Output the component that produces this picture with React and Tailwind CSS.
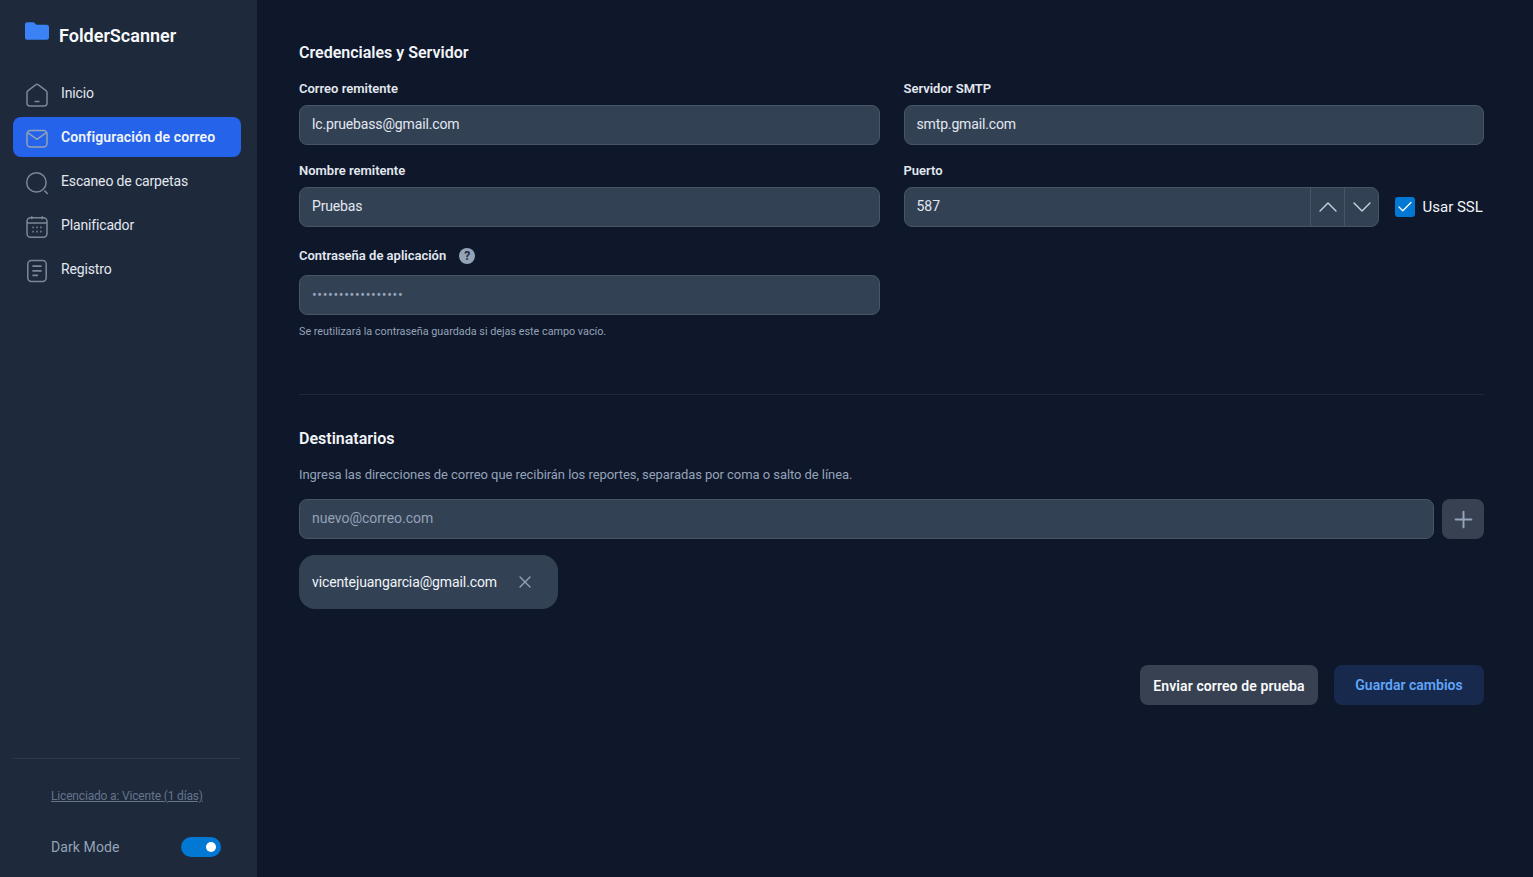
import React from 'react';
import { Check, ChevronDown, ChevronUp, Plus, X } from 'lucide-react';

const HomeIcon = () => (
  <svg width="24" height="24" viewBox="0 0 24 24" fill="none" stroke="currentColor" strokeWidth="1.5">
    <path d="M2 9.6c0-.8.35-1.5 1-2L10.6 1.8a2.2 2.2 0 0 1 2.8 0L21 7.6c.65.5 1 1.2 1 2V20a3 3 0 0 1-3 3H5a3 3 0 0 1-3-3V9.6Z" />
    <path d="M9.5 18.5h5" />
  </svg>
);

const MailIcon = () => (
  <svg width="24" height="24" viewBox="0 0 24 24" fill="none" stroke="currentColor" strokeWidth="1.5">
    <rect x="2" y="3.6" width="20" height="16.4" rx="3.4" />
    <path d="M3 5.8 12 12.4l9-6.6" />
  </svg>
);

const SearchIcon = () => (
  <svg width="24" height="24" viewBox="0 0 24 24" fill="none" stroke="currentColor" strokeWidth="1.5">
    <circle cx="11.4" cy="11.4" r="9.7" />
    <path d="m19.4 19.6 3.4 3.4" />
  </svg>
);

const CalendarIcon = () => (
  <svg width="24" height="24" viewBox="0 0 24 24" fill="none" stroke="currentColor" strokeWidth="1.5">
    <rect x="2" y="2.8" width="20" height="19.4" rx="3.6" />
    <path d="M2 8h20" />
    <path d="M6.8 1.2v3M17.2 1.2v3" />
    <path d="M7.4 12.4h1.4M11.3 12.4h1.4M15.2 12.4h1.4M7.4 16.6h1.4M11.3 16.6h1.4M15.2 16.6h1.4" strokeWidth="1.8" />
  </svg>
);

const LogIcon = () => (
  <svg width="24" height="24" viewBox="0 0 24 24" fill="none" stroke="currentColor" strokeWidth="1.5">
    <rect x="2.8" y="1.6" width="18.4" height="20.8" rx="3.6" />
    <path d="M7.4 7.2h9.2M7.4 11.8h9.2M7.4 16.4h5.6" strokeWidth="1.7" />
  </svg>
);

const navItems = [
  { label: 'Inicio', icon: HomeIcon },
  { label: 'Configuración de correo', icon: MailIcon, active: true },
  { label: 'Escaneo de carpetas', icon: SearchIcon },
  { label: 'Planificador', icon: CalendarIcon },
  { label: 'Registro', icon: LogIcon },
];

const Sidebar = () => (
  <aside className="w-[257px] shrink-0 h-full bg-[#1e293b] flex flex-col">
    <div className="flex items-start pl-[25px] pt-[21px] h-[73px] gap-[10px]">
      <svg width="24" height="20" viewBox="0 0 24 20" className="text-[#3b82f6] mt-[1px]" fill="currentColor">
        <path d="M0 2.4C0 1.1 1 .2 2.2.2h5.6c.7 0 1.3.3 1.8.8l1.7 1.7h10.6c1.1 0 2.1 1 2.1 2.1v10.8c0 1.2-1 2.1-2.1 2.1H2.1C1 17.8 0 16.9 0 15.7V2.4Z" />
      </svg>
      <span className="text-[18px] leading-[28px] font-semibold text-[#f8fafc] mt-[1px]">FolderScanner</span>
    </div>
    <nav className="flex flex-col gap-[4px] pl-[13px] pr-[16px]">
      {navItems.map(({ label, icon: Icon, active }) => (
        <a
          key={label}
          href="#"
          className={`flex items-center gap-[12px] h-[40px] pl-[12px] rounded-[8px] text-[14px] ${
            active ? 'bg-[#2563eb] text-[#f1f5f9] font-semibold tracking-[0.13px]' : 'text-[#e2e8f0] tracking-[-0.15px]'
          }`}
        >
          <span className={`mt-[3px] ${active ? 'text-[#94a3b8]' : 'text-[#7c8898]'}`}>
            <Icon />
          </span>
          <span>{label}</span>
        </a>
      ))}
    </nav>
    <div className="mt-auto ml-[13px] mr-[16px] border-t border-[#334155]/60 pt-[28px] pb-[20px]">
      <a href="#" className="block pl-[38px] text-[12px] leading-[18px] tracking-[-0.17px] text-[#64748b] underline">
        Licenciado a: Vicente (1 días)
      </a>
      <div className="flex items-center justify-between pl-[38px] pr-[20px] mt-[32px]">
        <span className="text-[14px] leading-[20px] tracking-[0.1px] text-[#94a3b8]">Dark Mode</span>
        <div className="w-[40px] h-[20px] rounded-full bg-[#0078d4] flex items-center justify-end pr-[5px]">
          <div className="w-[10px] h-[10px] rounded-full bg-white" />
        </div>
      </div>
    </div>
  </aside>
);

const boxClass = 'w-full h-[40px] px-[12px] rounded-[8px] bg-[#334155] border border-[#475569] text-[14px] outline-none';
const inputClass = `${boxClass} pb-[2px] tracking-[-0.15px] text-[#e2e8f0] placeholder:text-[#94a3b8] placeholder:tracking-normal`;

const Field = ({ label, value }) => (
  <div className="flex flex-col">
    <label className="text-[13px] leading-[20px] font-semibold text-[#e2e8f0] mb-[6px]">{label}</label>
    <input className={inputClass} value={value} readOnly />
  </div>
);

const App = () => (
  <div className="flex w-full h-[877px] overflow-hidden bg-[#0f172a] font-['Roboto','Noto_Sans',sans-serif]">
    <Sidebar />
    <main className="flex-1 pl-[42px] pr-[49px] pt-[41px]">
      <h2 className="text-[16px] leading-[24px] font-semibold text-[#f1f5f9] mb-[14px]">Credenciales y Servidor</h2>

      <div className="grid grid-cols-2 gap-x-[24px] gap-y-[16px]">
        <Field label="Correo remitente" value="lc.pruebass@gmail.com" />
        <Field label="Servidor SMTP" value="smtp.gmail.com" />
        <Field label="Nombre remitente" value="Pruebas" />
        <div className="flex flex-col">
          <label className="text-[13px] leading-[20px] font-semibold text-[#e2e8f0] mb-[6px]">Puerto</label>
          <div className="flex items-center">
            <div className="w-[475px] h-[40px] flex rounded-[8px] bg-[#334155] border border-[#475569] overflow-hidden">
              <input className="flex-1 min-w-0 px-[12px] pb-[2px] bg-transparent text-[14px] text-[#e2e8f0] outline-none" value="587" readOnly />
              <button className="w-[34px] pl-[1px] border-l border-[#475569] flex items-center justify-center text-[#cbd5e1]">
                <ChevronUp size={32} strokeWidth={1} />
              </button>
              <button className="w-[34px] pl-[1px] border-l border-[#475569] flex items-center justify-center text-[#cbd5e1]">
                <ChevronDown size={32} strokeWidth={1} />
              </button>
            </div>
            <div className="ml-[16px] w-[20px] h-[20px] rounded-[3px] bg-[#0078d4] flex items-center justify-center text-white">
              <Check size={18} strokeWidth={1.75} />
            </div>
            <span className="ml-[8px] text-[15px] text-[#f1f5f9]">Usar SSL</span>
          </div>
        </div>
      </div>

      <div className="mt-[19px] w-[581px]">
        <div className="flex items-center gap-[13px] mb-[9px]">
          <label className="text-[13px] leading-[20px] font-semibold text-[#e2e8f0]">Contraseña de aplicación</label>
          <span className="w-[16px] h-[16px] rounded-full bg-[#94a3b8] flex items-center justify-center text-[12px] leading-none font-bold text-[#1e293b]">?</span>
        </div>
        <input className={`${boxClass} text-[#94a3b8] tracking-[0.65px]`} type="password" value="aaaaaaaaaaaaaaaaa" readOnly />
        <p className="mt-[9px] text-[10.8px] leading-[16px] text-[#94a3b8]">
          Se reutilizará la contraseña guardada si dejas este campo vacío.
        </p>
      </div>

      <div className="border-t border-[#1e293b] mt-[54px]" />

      <h2 className="mt-[32px] text-[16px] leading-[24px] font-semibold text-[#f1f5f9]">Destinatarios</h2>
      <p className="mt-[14px] text-[13px] leading-[20px] tracking-[-0.06px] text-[#94a3b8]">
        Ingresa las direcciones de correo que recibirán los reportes, separadas por coma o salto de línea.
      </p>

      <div className="flex gap-[8px] mt-[14px]">
        <input className={inputClass} placeholder="nuevo@correo.com" readOnly />
        <button className="w-[42px] h-[40px] shrink-0 rounded-[8px] bg-[#374151] flex items-center justify-center text-[#94a3b8]">
          <Plus size={27} strokeWidth={1.75} />
        </button>
      </div>

      <div className="mt-[16px] inline-flex items-center h-[54px] w-[259px] pl-[13px] rounded-[16px] bg-[#334155]">
        <span className="text-[14px] tracking-[-0.11px] text-[#f1f5f9]">vicentejuangarcia@gmail.com</span>
        <X size={20} strokeWidth={1.6} className="ml-auto mr-[23px] text-[#94a3b8]" />
      </div>

      <div className="flex justify-end gap-[16px] mt-[56px]">
        <button className="h-[40px] w-[178px] pt-[2px] rounded-[8px] bg-[#374151] text-[14px] font-semibold tracking-[0.1px] text-[#f8fafc]">
          Enviar correo de prueba
        </button>
        <button className="h-[40px] w-[150px] rounded-[8px] bg-[#172a4d] text-[14px] font-semibold text-[#60a5fa]">
          Guardar cambios
        </button>
      </div>
    </main>
  </div>
);

export default App;
